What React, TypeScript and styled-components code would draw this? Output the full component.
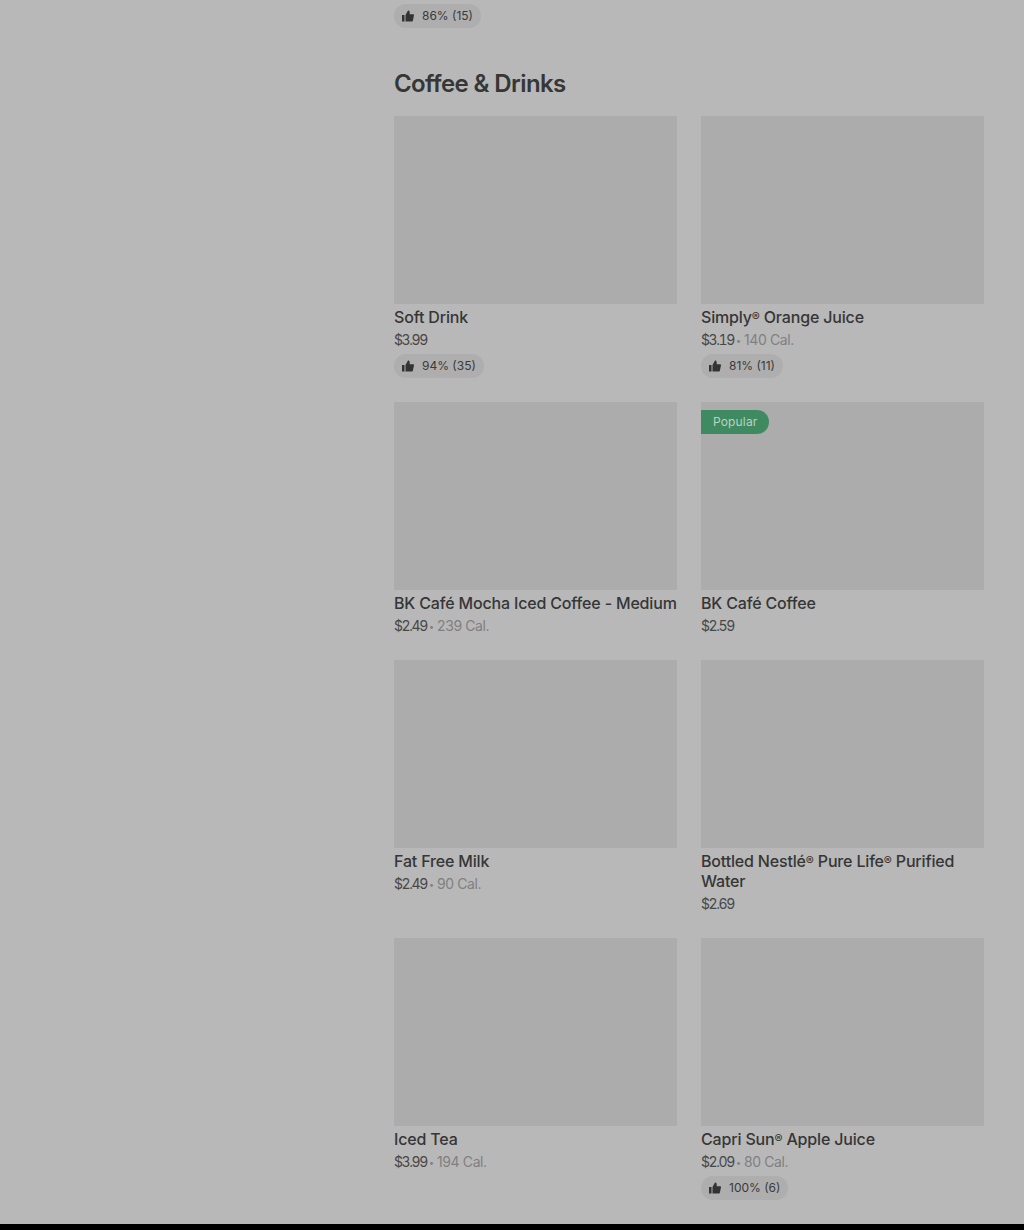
import { Fragment } from 'react'
import styled, { createGlobalStyle } from 'styled-components'

const GlobalStyle = createGlobalStyle`
  html, body {
    margin: 0;
    padding: 0;
    background: #b8b8b8;
  }
  body {
    font-family: Inter, "Liberation Sans", sans-serif;
    color: #363636;
  }
`

const Page = styled.div`
  width: 1024px;
  height: 1230px;
  display: flex;
  flex-direction: column;
  overflow: hidden;
  background: #b8b8b8;
`

const Content = styled.main`
  flex: 1;
  padding: 0 40px 24px 394px;
`

const Heading = styled.h2`
  margin: 40px 0 16px;
  font-size: 24px;
  line-height: 32px;
  font-weight: 600;
  letter-spacing: -0.6px;
  color: #363636;
`

const Grid = styled.div`
  display: grid;
  grid-template-columns: 283px 283px;
  column-gap: 24px;
  row-gap: 24px;
`

const Tile = styled.div`
  position: relative;
  height: 188px;
  background: #acacac;
`

const Badge = styled.span`
  position: absolute;
  top: 8px;
  left: 0;
  height: 24px;
  padding: 0 12px 2px;
  box-sizing: border-box;
  display: flex;
  align-items: center;
  font-size: 12px;
  letter-spacing: 0.15px;
  color: #b9d2c3;
  background: #3f8a60;
  border-radius: 0 12px 12px 0;
`

const Name = styled.div`
  margin-top: 3px;
  font-size: 16px;
  line-height: 20px;
  font-weight: 500;
  letter-spacing: -0.17px;
  color: #363636;
`

const Registered = styled.span`
  font-size: 12px;
  line-height: 0;
  vertical-align: 2px;
`

const Meta = styled.div`
  margin-top: 3px;
  font-size: 14px;
  line-height: 20px;
  color: #474747;
`

const Price = styled.span`
  font-feature-settings: "tnum";
  letter-spacing: -1.4px;
`

const Dot = styled.span`
  margin: 0 3px 0 2px;
  font-size: 9px;
  line-height: 0;
  vertical-align: 1px;
  color: #808080;
`

const Calories = styled.span`
  color: #808080;
  letter-spacing: -0.4px;
`

const Pill = styled.div`
  margin-top: 4px;
  width: fit-content;
  height: 24px;
  padding: 0 8px 1px;
  box-sizing: border-box;
  display: flex;
  align-items: center;
  gap: 8px;
  font-size: 12px;
  color: #3a3a3a;
  background: #aeaeae;
  border-radius: 12px;
`

const Footer = styled.div`
  flex: none;
  height: 7px;
  background: #000;
`

const ThumbIcon = () => (
  <svg width="12" height="12" viewBox="0 0 12 12" aria-hidden="true">
    <path fill="#333" d="M0 5h2.500v6.500H0zM3.500 5 6 .5c1 0 1.700.7 1.700 1.700V4.300H11c.7 0 1 .5 1 1L10.800 11c-.1.300-.4.500-.8.500H3.500z" />
  </svg>
)

type Item = {
  name: string
  price: string
  cal?: string
  rating?: string
  badge?: string
}

const items: Item[] = [
  { name: 'Soft Drink', price: '$3.99', rating: '94% (35)' },
  { name: 'Simply® Orange Juice', price: '$3.19', cal: '140 Cal.', rating: '81% (11)' },
  { name: 'BK Café Mocha Iced Coffee - Medium', price: '$2.49', cal: '239 Cal.' },
  { name: 'BK Café Coffee', price: '$2.59', badge: 'Popular' },
  { name: 'Fat Free Milk', price: '$2.49', cal: '90 Cal.' },
  { name: 'Bottled Nestlé® Pure Life® Purified Water', price: '$2.69' },
  { name: 'Iced Tea', price: '$3.99', cal: '194 Cal.' },
  { name: 'Capri Sun® Apple Juice', price: '$2.09', cal: '80 Cal.', rating: '100% (6)' },
]

const Rating = ({ value }: { value: string }) => (
  <Pill>
    <ThumbIcon />
    {value}
  </Pill>
)

// the ® sits small and raised in the reference
const renderName = (name: string) =>
  name.split('®').map((part, i) => (
    <Fragment key={i}>
      {i > 0 && <Registered>®</Registered>}
      {part}
    </Fragment>
  ))

export default function App() {
  return (
    <Page>
      <GlobalStyle />
      <Content>
        <Rating value="86% (15)" />
        <Heading>Coffee &amp; Drinks</Heading>
        <Grid>
          {items.map((item) => (
            <div key={item.name}>
              <Tile>{item.badge && <Badge>{item.badge}</Badge>}</Tile>
              <Name>{renderName(item.name)}</Name>
              <Meta>
                <Price>{item.price}</Price>
                {item.cal && (
                  <>
                    <Dot>•</Dot>
                    <Calories>{item.cal}</Calories>
                  </>
                )}
              </Meta>
              {item.rating && <Rating value={item.rating} />}
            </div>
          ))}
        </Grid>
      </Content>
      <Footer />
    </Page>
  )
}
